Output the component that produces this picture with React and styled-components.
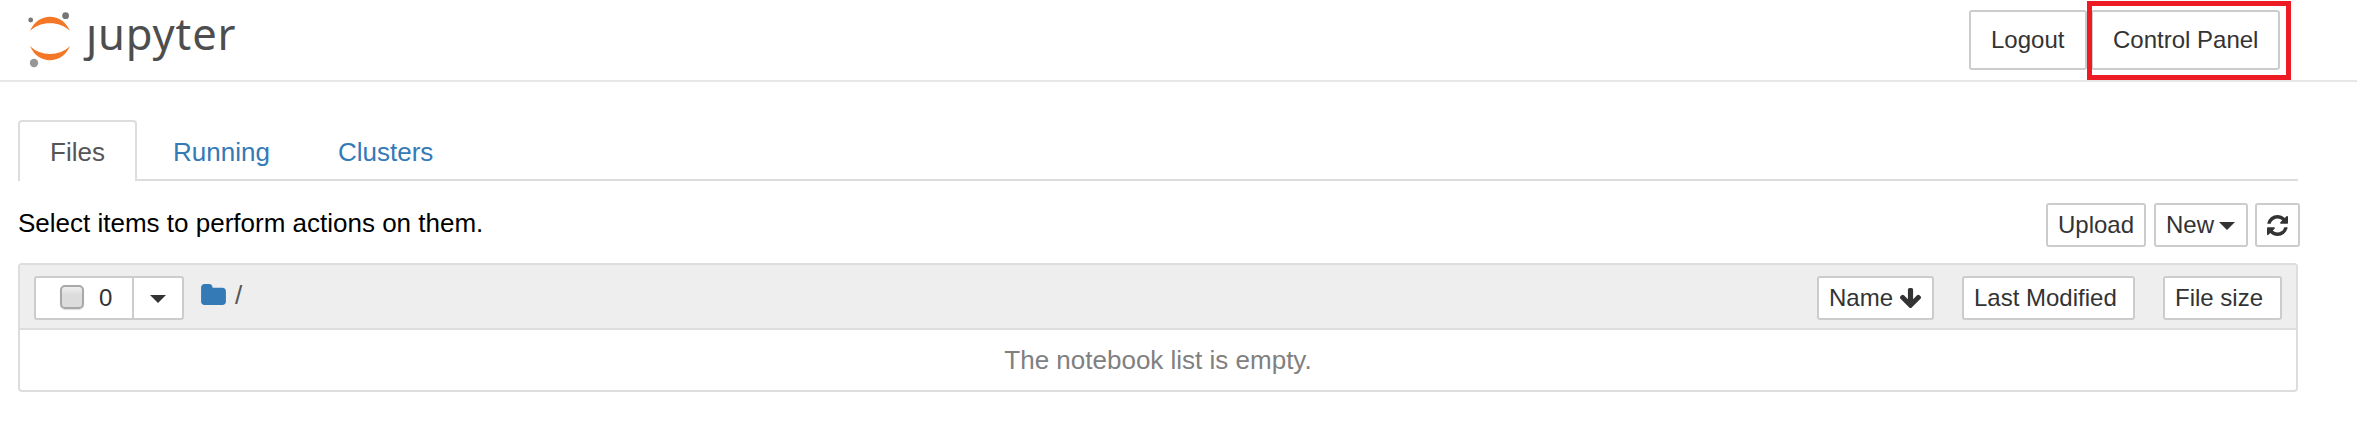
import React from "react";
import styled, { createGlobalStyle, css } from "styled-components";

const GlobalStyle = createGlobalStyle`
  *, *::after { box-sizing: border-box; }
  body {
    margin: 0;
    background: #fff;
    color: #000;
    font-family: "Liberation Sans", Arial, Helvetica, sans-serif;
    font-size: 26px;
    line-height: 36px;
  }
`;

const Header = styled.header`
  display: flex;
  justify-content: space-between;
  height: 82px;
  padding: 10px 77px 0 27px;
  border-bottom: 2px solid #e7e7e7;
`;

const Brand = styled.a`
  display: flex;
  height: 60px;
  color: #4e4e4e;
`;

const Planet = styled.svg`
  width: 46px;
  height: 60px;
  flex: none;
`;

const Wordmark = styled.span`
  margin: -9px 0 0 13px;
  font: 43.5px/64px "Noto Sans", "Open Sans", sans-serif;
  letter-spacing: 0.85px;
  white-space: nowrap;
`;

const DotlessJ = styled.span`
  display: inline-block;
  clip-path: inset(23px -10px -10px -10px);
`;

const HeaderActions = styled.div`
  display: flex;
  gap: 4px;
`;

const Button = styled.button`
  display: flex;
  align-items: center;
  flex: none;
  width: ${(p) => p.$width}px;
  height: 44px;
  padding: 0 0 0 ${(p) => p.$pad ?? 10}px;
  border: 2px solid #ccc;
  border-radius: 3px;
  background: #fff;
  color: #333;
  font-family: inherit;
  font-size: 24px;
  line-height: 36px;
  white-space: pre;
  ${(p) =>
    p.$large &&
    css`
      height: 60px;
    `}
`;

const Highlight = styled.div`
  position: relative;
  &::after {
    content: "";
    position: absolute;
    top: -9px;
    left: -4px;
    width: 204px;
    height: 79px;
    border: 5px solid #ed1c24;
  }
`;

const Main = styled.main`
  width: 2280px;
  margin: 38px 0 0 18px;
`;

const Tabs = styled.nav`
  display: flex;
  height: 61px;
  border-bottom: 2px solid #ddd;
`;

const Tab = styled.a`
  height: 61px;
  width: ${(p) => p.$width}px;
  margin-right: 4px;
  padding: 12px 0 0 30px;
  border: 2px solid transparent;
  border-bottom: 0;
  border-radius: 4px 4px 0 0;
  color: #337ab7;
  ${(p) =>
    p.$active &&
    css`
      border-color: #ddd;
      background: #fff;
      color: #555;
    `}
`;

const Toolbar = styled.div`
  display: flex;
  justify-content: space-between;
  height: 82px;
  padding-top: 22px;
  margin-right: -2px;
`;

const Hint = styled.div`
  padding-top: 2px;
`;

const Actions = styled.div`
  display: flex;
  gap: 7px;
  > :first-child {
    margin-right: 1px;
  }
`;

const Panel = styled.section`
  height: 129px;
  border: 2px solid #ddd;
  border-radius: 4px;
`;

const PanelHeader = styled.div`
  display: flex;
  height: 65px;
  padding: 11px 14px 0;
  border-bottom: 2px solid #ddd;
  background: #eee;
`;

const SelectGroup = styled.div`
  display: flex;
  > :first-child {
    border-radius: 3px 0 0 3px;
  }
  > :last-child {
    margin-left: -2px;
    border-radius: 0 3px 3px 0;
  }
`;

const Checkbox = styled.span`
  width: 24px;
  height: 24px;
  margin: -3px 15px 0 0;
  border: 2px solid #a8a8a8;
  border-radius: 5px;
  background: linear-gradient(#eee, #dcdcdc 40%);
  box-shadow: 0 1px 1px #ddd;
`;

const Caret = styled.span`
  border: 8px solid transparent;
  border-top-color: #333;
  border-bottom: 0;
  margin: 2px 0 0 ${(p) => p.$gap ?? 0}px;
`;

const Breadcrumb = styled.div`
  display: flex;
  margin-left: 17px;
  padding-top: 1px;
  color: #555;
  svg {
    margin: 7px 9px 0 0;
    color: #337ab7;
  }
`;

const SortButtons = styled.div`
  display: flex;
  gap: 28px;
  margin-left: auto;
`;

const Empty = styled.div`
  padding-top: 12px;
  color: #808080;
  text-align: center;
`;

const Refresh = () => (
  <svg width="21" height="21" viewBox="0 0 1536 1536" fill="currentColor">
    <path d="M1511 928q0 5-1 7-64 268-268 434.500T764 1536q-146 0-282.500-55T238 1324l-129 129q-19 19-45 19t-45-19-19-45V960q0-26 19-45t45-19h448q26 0 45 19t19 45-19 45l-137 137q71 66 161 102t187 36q134 0 250-65t186-179q11-17 53-117 8-23 30-23h192q13 0 22.500 9.500t9.500 22.500zm25-800v448q0 26-19 45t-45 19h-448q-26 0-45-19t-19-45 19-45l138-138Q969 256 768 256q-134 0-250 65T332 500q-11 17-53 117-8 23-30 23H50q-13 0-22.500-9.500T18 608v-7q65-268 270-434.500T768 0q146 0 284 55.500T1297 212l130-129q19-19 45-19t45 19 19 45z" />
  </svg>
);

const ArrowDown = () => (
  <svg width="21" height="20" viewBox="117 128 1558 1483" fill="currentColor">
    <path d="M1675 832q0 53-37 90l-651 652q-39 37-91 37-53 0-90-37l-651-652q-38-36-38-90 0-53 38-91l74-75q39-37 91-37 53 0 90 37l294 294v-704q0-52 38-90t90-38h128q52 0 90 38t38 90v704l294-294q37-37 90-37 52 0 91 37l75 75q37 39 37 91z" />
  </svg>
);

const Folder = () => (
  <svg width="25" height="21" viewBox="64 128 1664 1408" fill="currentColor">
    <path d="M1728 608v704q0 92-66 158t-158 66h-1216q-92 0-158-66t-66-158v-960q0-92 66-158t158-66h320q92 0 158 66t66 158v32h672q92 0 158 66t66 158z" />
  </svg>
);

export default function App() {
  return (
    <>
      <GlobalStyle />
      <Header>
        <Brand>
          <Planet viewBox="27 10 46 60">
            <path fill="#f37726" d="M30 31 C38 12 62 12 70 31 C60 20.500 40 20.500 30 31Z" />
            <path fill="#f37726" d="M30 46 C38 65 62 65 70 46 C60 56.500 40 56.500 30 46Z" />
            <circle cx="65.600" cy="15.700" r="3.400" fill="#767677" />
            <circle cx="30.700" cy="20" r="2.400" fill="#767677" />
            <circle cx="34" cy="63" r="4.200" fill="#989798" />
          </Planet>
          <Wordmark><DotlessJ>j</DotlessJ>upyter</Wordmark>
        </Brand>
        <HeaderActions>
          <Button $large $width={118} $pad={20}>Logout</Button>
          <Highlight>
            <Button $large $width={189} $pad={20}>Control Panel</Button>
          </Highlight>
        </HeaderActions>
      </Header>
      <Main>
        <Tabs>
          <Tab $active $width={119}>Files</Tab>
          <Tab $width={161}>Running</Tab>
          <Tab $width={160}>Clusters</Tab>
        </Tabs>
        <Toolbar>
          <Hint>Select items to perform actions on them.</Hint>
          <Actions>
            <Button $width={100}>Upload</Button>
            <Button $width={94}>New<Caret $gap={5} /></Button>
            <Button $width={45}><Refresh /></Button>
          </Actions>
        </Toolbar>
        <Panel>
          <PanelHeader>
            <SelectGroup>
              <Button $width={100} $pad={24}><Checkbox />0</Button>
              <Button $width={52} $pad={16}><Caret /></Button>
            </SelectGroup>
            <Breadcrumb><Folder />/</Breadcrumb>
            <SortButtons>
              <Button $width={117}>Name <ArrowDown /></Button>
              <Button $width={173}>Last Modified</Button>
              <Button $width={119}>File size</Button>
            </SortButtons>
          </PanelHeader>
          <Empty>The notebook list is empty.</Empty>
        </Panel>
      </Main>
    </>
  );
}
